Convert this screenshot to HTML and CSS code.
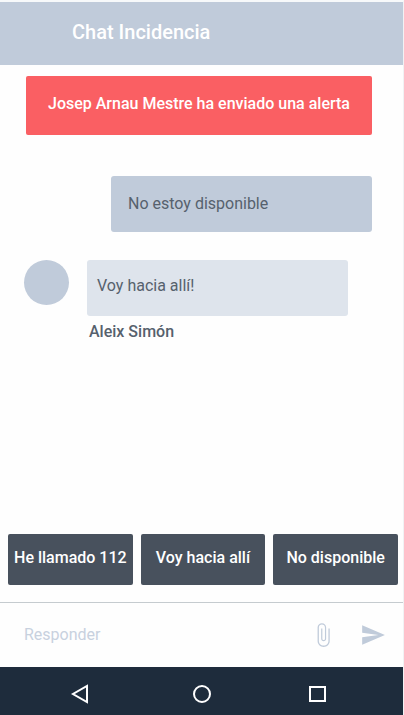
FILE: index.html
```html
<!DOCTYPE html>
<html lang="es">
<head>
  <meta charset="UTF-8">
  <meta name="viewport" content="width=device-width, initial-scale=1.0">
  <title>Chat Incidencia</title>
  <link rel="stylesheet" href="styles.css">
</head>
<body>
  <header class="header">
    <h1>Chat Incidencia</h1>
  </header>

  <main class="chat">
    <div class="alert">Josep Arnau Mestre ha enviado una alerta</div>

    <div class="bubble sent">No estoy disponible</div>

    <div class="message">
      <div class="avatar"></div>
      <div class="message-body">
        <div class="bubble received">Voy hacia allí!</div>
        <div class="author">Aleix Simón</div>
      </div>
    </div>
  </main>

  <div class="quick-replies">
    <button type="button">He llamado 112</button>
    <button type="button">Voy hacia allí</button>
    <button type="button">No disponible</button>
  </div>

  <form class="compose">
    <input type="text" placeholder="Responder" aria-label="Responder">
    <button type="button" aria-label="Adjuntar">
      <svg width="26" height="26" viewBox="0 0 24 24"><path d="M17 6v11.5c0 2.5-2 4.300-4.400 4.300s-4.400-1.800-4.400-4.300V5c0-1.600 1.200-2.800 2.800-2.800s2.800 1.200 2.800 2.800v10.500c0 .7-.5 1.200-1.200 1.200s-1.200-.5-1.200-1.200V6h-1.100v9.500c0 1.300 1 2.300 2.300 2.300s2.300-1 2.300-2.300V5c0-2.200-1.700-3.900-3.900-3.900S7 2.800 7 5v12.500c0 3.100 2.500 5.500 5.600 5.500s5.600-2.400 5.600-5.500V6z"/></svg>
    </button>
    <button type="button" aria-label="Enviar">
      <svg width="26" height="26" viewBox="0 0 24 24"><path d="M2 21l21-9L2 3v7l15 2-15 2z"/></svg>
    </button>
  </form>

  <nav class="navbar">
    <button type="button" aria-label="Atrás">
      <svg width="20" height="20" viewBox="0 0 20 20"><path d="M17 2v16L3 10z"/></svg>
    </button>
    <button type="button" aria-label="Inicio">
      <svg width="20" height="20" viewBox="0 0 20 20"><circle cx="10" cy="10" r="8"/></svg>
    </button>
    <button type="button" aria-label="Recientes">
      <svg width="20" height="20" viewBox="0 0 20 20"><path d="M2 3h15v14H2z"/></svg>
    </button>
  </nav>
</body>
</html>
```
FILE: styles.css
```css
* {
  box-sizing: border-box;
}
body {
  display: flex;
  flex-direction: column;
  min-height: 100vh;
  margin: 0;
  border-top: 2px solid #f7f9fa;
  border-right: 1px solid #f1f2f4;
  background-color: #fefefe;
  color: #56616d;
  font-family: Roboto, sans-serif;
  font-size: 16px;
  line-height: 20px;
}
button {
  border: none;
  padding: 0;
  background: none;
  font: inherit;
  cursor: pointer;
}
svg {
  display: block;
}
.header {
  padding: 18px 72px 21px;
  background-color: #c0cbda;
}
.header h1 {
  margin: 0;
  color: #fff;
  font-size: 20px;
  font-weight: 500;
  line-height: 24px;
}
.chat {
  flex: 1;
  display: flex;
  flex-direction: column;
  padding: 11px 31px 0 24px;
}
.alert {
  margin-left: 2px;
  padding: 18px 10px 21px;
  border-radius: 2px;
  background-color: #fa5f63;
  color: #fff;
  font-weight: 500;
  text-align: center;
}
.bubble {
  height: 56px;
  border-radius: 3px;
}
.sent {
  width: 75%;
  margin-top: 41px;
  margin-left: auto;
  padding: 18px 17px;
  background-color: #c0cbda;
}
.message {
  display: flex;
  gap: 18px;
  margin-top: 28px;
}
.avatar {
  width: 45px;
  height: 45px;
  border-radius: 50%;
  background-color: #c0cbda;
}
.message-body {
  width: 75%;
}
.received {
  padding: 16px 10px;
  background-color: #dee4ec;
}
.author {
  padding: 6px 2px;
  font-weight: 500;
}
.quick-replies {
  display: grid;
  grid-template-columns: repeat(3, 1fr);
  gap: 8px;
  padding: 0 5px 17px 8px;
}
.quick-replies button {
  height: 51px;
  padding-bottom: 4px;
  border-radius: 2px;
  background-color: #48515d;
  color: #fff;
  font-weight: 500;
  white-space: nowrap;
}
.compose {
  display: flex;
  align-items: center;
  gap: 24px;
  height: 65px;
  padding: 0 17px 0 24px;
  border-top: 1px solid #c5cbcf;
}
.compose input {
  flex: 1;
  min-width: 0;
  padding: 0;
  border: none;
  outline: none;
  background: none;
  color: #56616d;
  font: inherit;
}
.compose input::placeholder {
  color: #c8d1de;
  opacity: 1;
}
.compose svg {
  fill: #c0cbda;
}
.navbar {
  display: grid;
  grid-template-columns: 122fr 116fr auto;
  justify-items: start;
  align-items: center;
  height: 48px;
  padding: 6px 75px 0 70px;
  background-color: #1e2c3c;
}
.navbar svg {
  fill: none;
  stroke: #fff;
  stroke-width: 2;
}
```
